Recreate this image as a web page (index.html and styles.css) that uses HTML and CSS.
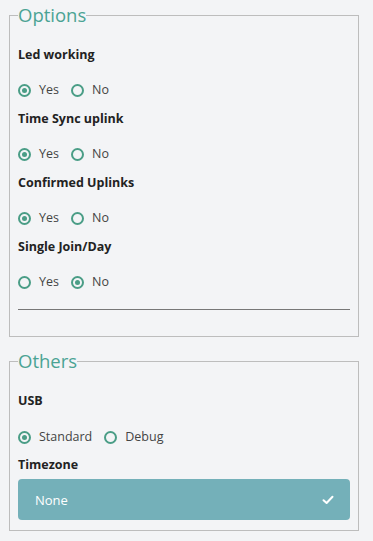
FILE: index.html
```html
<!DOCTYPE html>
<html lang="en">
<head>
    <meta charset="UTF-8">
    <meta name="viewport" content="width=device-width, initial-scale=1.0">
    <title>Device Settings</title>
    <link rel="stylesheet" href="styles.css">
</head>
<body>
    <fieldset class="group">
        <legend>Options</legend>

        <div class="field">
            <div class="field-label">Led working</div>
            <div class="choices">
                <label class="choice"><input type="radio" name="led" checked> Yes</label>
                <label class="choice"><input type="radio" name="led"> No</label>
            </div>
        </div>

        <div class="field">
            <div class="field-label">Time Sync uplink</div>
            <div class="choices">
                <label class="choice"><input type="radio" name="sync" checked> Yes</label>
                <label class="choice"><input type="radio" name="sync"> No</label>
            </div>
        </div>

        <div class="field">
            <div class="field-label">Confirmed Uplinks</div>
            <div class="choices">
                <label class="choice"><input type="radio" name="confirmed" checked> Yes</label>
                <label class="choice"><input type="radio" name="confirmed"> No</label>
            </div>
        </div>

        <div class="field">
            <div class="field-label">Single Join/Day</div>
            <div class="choices">
                <label class="choice"><input type="radio" name="join"> Yes</label>
                <label class="choice"><input type="radio" name="join" checked> No</label>
            </div>
        </div>

        <hr class="divider">
    </fieldset>

    <fieldset class="group others">
        <legend>Others</legend>

        <div class="field">
            <div class="field-label">USB</div>
            <div class="choices">
                <label class="choice"><input type="radio" name="usb" checked> Standard</label>
                <label class="choice"><input type="radio" name="usb"> Debug</label>
            </div>
        </div>

        <div class="field-label tz-label">Timezone</div>
        <div class="select">
            <span>None</span>
            <svg width="12" height="10" viewBox="0 0 12 10">
                <path d="M1.5 5.2 L4.6 8 L10.5 1.8" fill="none" stroke="#fff" stroke-width="2" stroke-linecap="round" stroke-linejoin="round"/>
            </svg>
        </div>
    </fieldset>
</body>
</html>
```

FILE: styles.css
```css
* {
    box-sizing: border-box;
}

body {
    margin: 0;
    padding: 3px 14px 0 9px;
    background: #f3f4f6;
    font-family: "Open Sans", "Noto Sans", sans-serif;
    color: #222;
}

.group {
    margin: 0;
    padding: 18px 8px 0 8px;
    border: 1px solid #bdbdbd;
    height: 334px;
}

.group legend {
    padding: 0;
    font-size: 18.5px;
    line-height: 24px;
    font-weight: 400;
    color: #4aa394;
}

.field-label {
    font-size: 12.5px;
    font-weight: 700;
    line-height: 20px;
    color: #222;
}

.choices {
    display: flex;
    gap: 12px;
    margin-top: 15px;
    margin-bottom: 9px;
}

.choice {
    display: flex;
    align-items: center;
    gap: 8px;
    font-size: 12.5px;
    line-height: 20px;
    color: #444;
}

.choice input {
    appearance: none;
    -webkit-appearance: none;
    margin: 0;
    width: 13px;
    height: 13px;
    border: 2px solid #4a9d86;
    border-radius: 50%;
    display: grid;
    place-content: center;
}

.choice input:checked::before {
    content: "";
    width: 5px;
    height: 5px;
    border-radius: 50%;
    background: #4a9d86;
}

.divider {
    margin: 17px 0 0 0;
    border: none;
    border-top: 1px solid #777;
}

.others {
    margin-top: 12px;
    height: 182px;
}

.others .choices {
    margin-top: 16px;
    margin-bottom: 8px;
}

.tz-label {
    margin-bottom: 4px;
}

.select {
    display: flex;
    align-items: center;
    justify-content: space-between;
    height: 41px;
    padding: 0 16px 0 17px;
    background: #74b0b9;
    border-radius: 4px;
    color: #fff;
    font-size: 13px;
}
```
